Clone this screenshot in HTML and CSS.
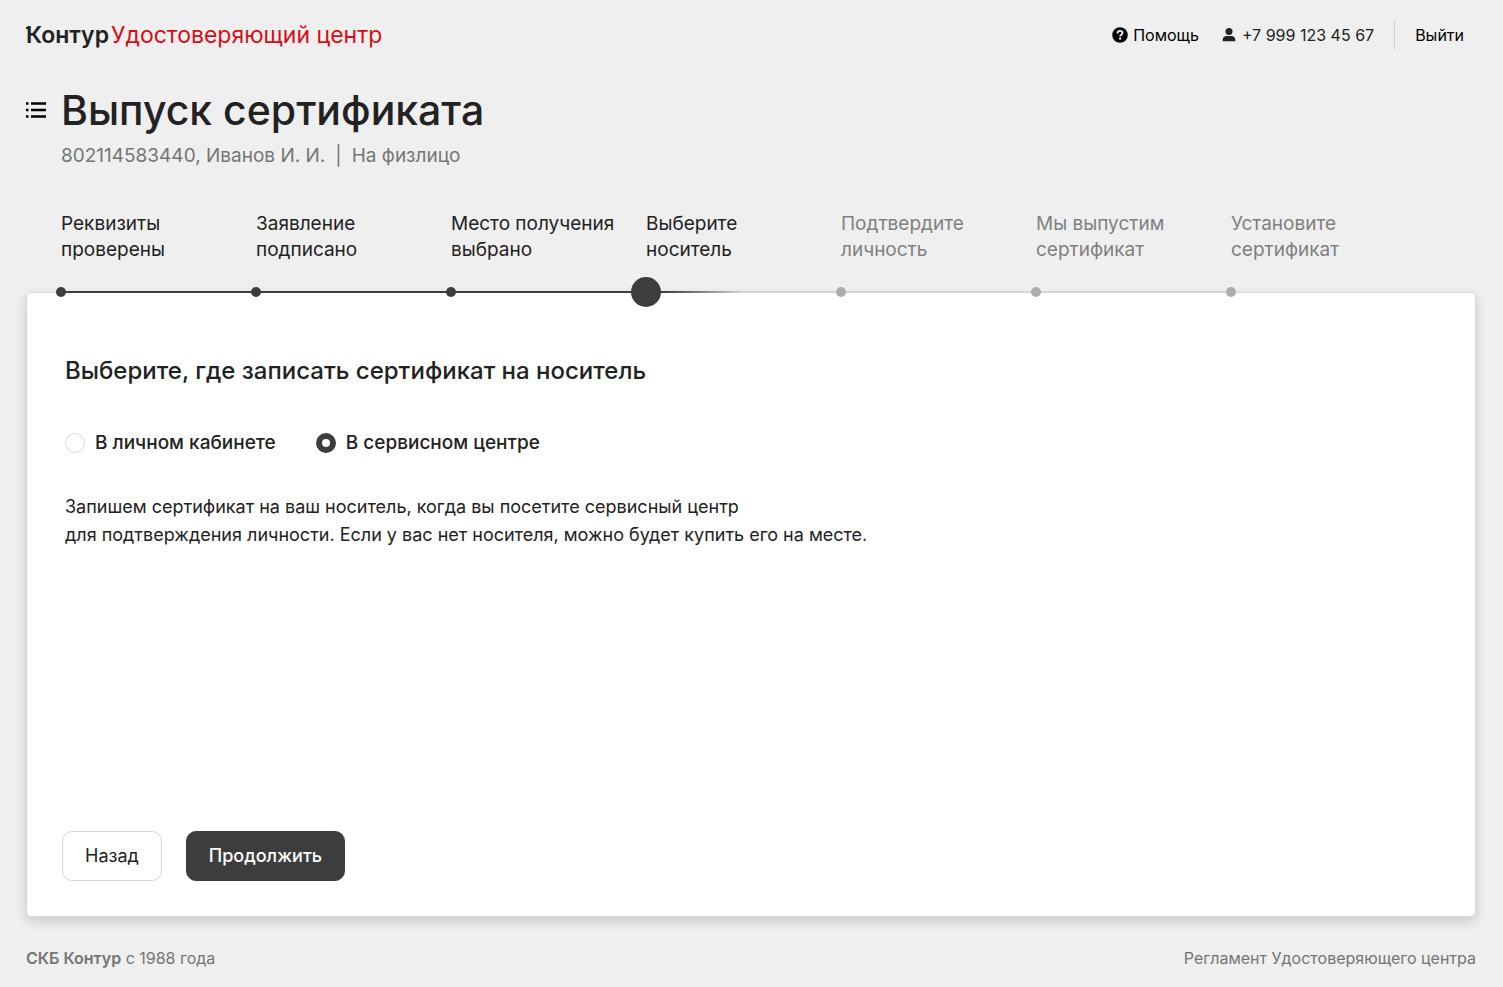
FILE: index.html
```html
<!DOCTYPE html>
<html lang="ru">
<head>
<meta charset="utf-8">
<meta name="viewport" content="width=device-width, initial-scale=1">
<title>Выпуск сертификата</title>
<link rel="stylesheet" href="styles.css">
</head>
<body>
<div class="page">
  <header class="header">
    <a class="logo" href="#"><span class="logo-brand">Контур</span><span class="logo-product">Удостоверяющий центр</span></a>
    <nav class="user-nav">
      <a class="nav-link" href="#">
        <svg class="nav-icon" viewBox="0 0 16 16" aria-hidden="true"><circle cx="8" cy="8" r="7.8" fill="#000"/><path d="M5.500 6.500C5.500 4.700 6.500 3.900 8 3.900s2.500.8 2.500 2.200c0 1.600-2.400 1.700-2.400 3.500" fill="none" stroke="#efefef" stroke-width="1.900"/><circle cx="8.100" cy="11.700" r="1.150" fill="#efefef"/></svg>
        <span>Помощь</span>
      </a>
      <a class="nav-link nav-phone" href="#">
        <svg class="nav-icon" viewBox="0 0 16 16" aria-hidden="true"><circle cx="8" cy="4.600" r="3.500" fill="#222"/><path d="M1.700 14.200v-1.400c0-2.400 1.600-3.800 4-3.800h4.600c2.400 0 4 1.400 4 3.800v1.400z" fill="#222"/></svg>
        <span>+7 999 123 45 67</span>
      </a>
      <a class="nav-link nav-exit" href="#">Выйти</a>
    </nav>
  </header>

  <main class="main">
    <div class="title-row">
      <button class="menu-button" type="button" aria-label="Меню">
        <svg class="menu-icon" viewBox="0 0 20 16" aria-hidden="true"><path d="M0 1.500h2.500M0 8h2.500M0 14.500h2.500M5 1.500h15M5 8h15M5 14.500h15" stroke="#000" stroke-width="2.300"/></svg>
      </button>
      <h1 class="title">Выпуск сертификата</h1>
    </div>
    <p class="subtitle"><span>802114583440, Иванов И. И.</span><span>|</span><span>На физлицо</span></p>

    <ol class="steps">
      <li class="step step-done"><span class="step-label">Реквизиты<br>проверены</span><span class="step-track"><span class="step-dot"></span></span></li>
      <li class="step step-done"><span class="step-label">Заявление<br>подписано</span><span class="step-track"><span class="step-dot"></span></span></li>
      <li class="step step-done"><span class="step-label">Место получения<br>выбрано</span><span class="step-track"><span class="step-dot"></span></span></li>
      <li class="step step-current" aria-current="step"><span class="step-label">Выберите<br>носитель</span><span class="step-track"><span class="step-dot"></span></span></li>
      <li class="step"><span class="step-label">Подтвердите<br>личность</span><span class="step-track"><span class="step-dot"></span></span></li>
      <li class="step"><span class="step-label">Мы выпустим<br>сертификат</span><span class="step-track"><span class="step-dot"></span></span></li>
      <li class="step step-last"><span class="step-label">Установите<br>сертификат</span><span class="step-track"><span class="step-dot"></span></span></li>
    </ol>

    <form class="card">
      <h2 class="card-title" id="place-title">Выберите, где записать сертификат на носитель</h2>
      <div class="options" role="radiogroup" aria-labelledby="place-title">
        <label class="option"><input class="radio" type="radio" name="place" value="cabinet"><span>В личном кабинете</span></label>
        <label class="option"><input class="radio" type="radio" name="place" value="center" checked><span>В сервисном центре</span></label>
      </div>
      <p class="description">Запишем сертификат на ваш носитель, когда вы посетите сервисный центр<br>для подтверждения личности. Если у вас нет носителя, можно будет купить его на месте.</p>
      <div class="actions">
        <button class="button" type="button">Назад</button>
        <button class="button button-primary" type="button">Продолжить</button>
      </div>
    </form>
  </main>

  <footer class="footer">
    <span><b class="footer-brand">СКБ Контур</b> с 1988 года</span>
    <a class="footer-link" href="#">Регламент Удостоверяющего центра</a>
  </footer>
</div>
</body>
</html>
```
FILE: styles.css
```css
*, *::before, *::after { box-sizing: border-box; }

body {
  margin: 0;
  background: #efefef;
  color: #222;
  font-family: Inter, "Noto Sans", sans-serif;
  font-size: 19px;
  line-height: 28px;
}

a { color: inherit; text-decoration: none; }
h1, h2, p, ol { margin: 0; padding: 0; }

.page {
  display: flex;
  flex-direction: column;
  min-height: 100vh;
  padding: 20px 27px 15px 26px;
}

.header {
  display: flex;
  justify-content: space-between;
  align-items: center;
  height: 30px;
}

.logo { display: flex; gap: 2px; font-size: 23px; }
.logo-brand { position: relative; font-weight: 600; }
/* serif on the first letter of the wordmark */
.logo-brand::before {
  content: "";
  position: absolute;
  top: 6px;
  left: 0;
  width: 4px;
  height: 2px;
  background: #222;
}
.logo-product { color: #d70c17; }

.user-nav { display: flex; font-size: 16px; color: #000; }
.nav-link { display: flex; align-items: center; gap: 5px; }
.nav-icon { width: 16px; height: 16px; }
.nav-phone { margin-left: 22px; color: #222; }
.nav-exit {
  height: 30px;
  margin-left: 20px;
  padding: 0 12px 0 20px;
  border-left: 1px solid #d0d0d0;
}

.main { display: flex; flex: 1; flex-direction: column; }

.title-row { display: flex; align-items: center; gap: 15px; margin-top: 32px; }
.menu-button {
  display: flex;
  padding: 0;
  border: 0;
  background: none;
  cursor: pointer;
}
.menu-icon { width: 20px; height: 16px; }
.title { font-size: 41px; font-weight: 500; line-height: 56px; }

.subtitle {
  display: flex;
  gap: 10px;
  margin-top: 4px;
  padding-left: 35px;
  color: #757575;
}

.steps {
  position: relative;
  z-index: 1;
  display: flex;
  margin: 41px 0 -15px 35px;
  list-style: none;
}
.step { flex: 0 1 195px; color: #808080; line-height: 26px; }
.step-done, .step-current { color: #222; }
.step-label { display: block; }
.step-track {
  display: flex;
  align-items: center;
  height: 30px;
  margin-top: 14px;
  background: linear-gradient(#d6d6d6, #d6d6d6) center / 100% 2px no-repeat;
}
.step-dot { width: 10px; height: 10px; margin-left: -5px; border-radius: 50%; background: #adadad; }
.step-done .step-track { background-image: linear-gradient(#3d3d3d, #3d3d3d); }
.step-done .step-dot { background: #3d3d3d; }
.step-current .step-track { background-image: linear-gradient(90deg, #3d3d3d 10%, #d6d6d6 50%); }
.step-current .step-dot { width: 30px; height: 30px; margin-left: -15px; background: #3d3d3d; }
.step-last .step-track { background: none; }

.card {
  display: flex;
  flex: 1;
  flex-direction: column;
  padding: 62px 35px 35px;
  border: 1px solid #d6d6d6;
  border-radius: 5px;
  background: #fff;
  box-shadow: 0 5px 12px rgba(0, 0, 0, 0.15);
}
.card-title { padding-left: 3px; font-size: 24px; font-weight: 500; line-height: 32px; }

.options { display: flex; gap: 40px; margin-top: 42px; padding-left: 3px; }
.option { display: flex; align-items: center; gap: 10px; font-weight: 500; }
.radio {
  width: 20px;
  height: 20px;
  margin: 0;
  border: 1px solid #d6d6d6;
  border-radius: 50%;
  appearance: none;
  background: #fff;
}
.radio:checked { border: 6px solid #3d3d3d; }

.description { margin-top: 36px; padding-left: 3px; font-size: 18px; }

.actions { display: flex; gap: 24px; margin-top: auto; }
.button {
  height: 50px;
  padding: 0 22px;
  border: 1px solid #d6d6d6;
  border-radius: 10px;
  background: #fff;
  color: #222;
  font: inherit;
  font-size: 18px;
  cursor: pointer;
}
.button-primary { border-color: #3d3d3d; background: #3d3d3d; color: #fff; font-weight: 500; }

.footer {
  display: flex;
  justify-content: space-between;
  margin-top: 27px;
  color: #757575;
  font-size: 16px;
}
.footer-brand { font-weight: 600; }
```
